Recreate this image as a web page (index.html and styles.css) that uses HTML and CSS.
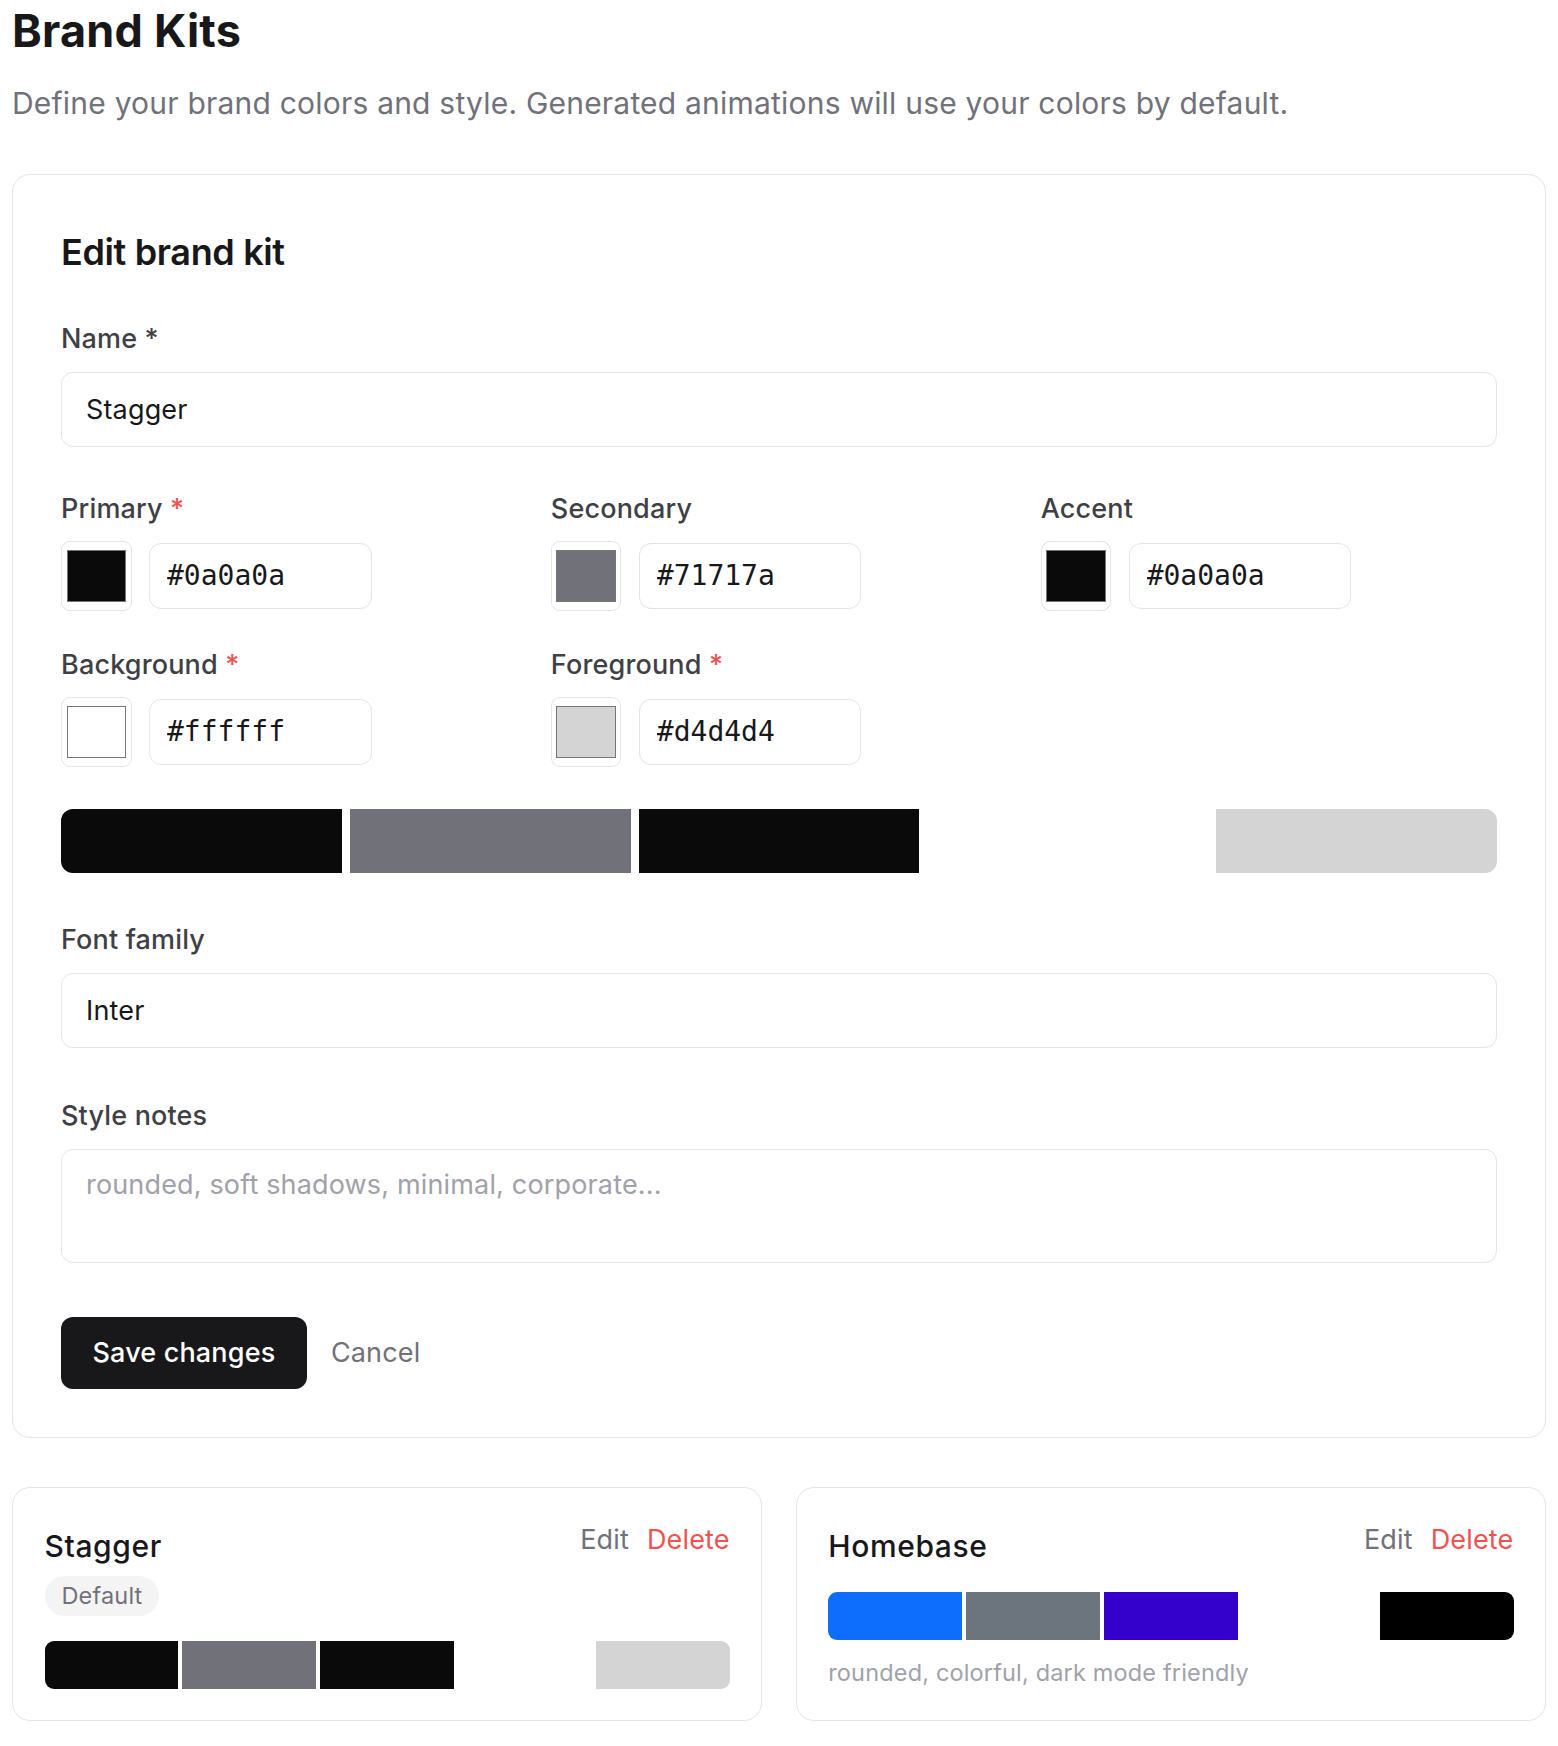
FILE: index.html
```html
<!DOCTYPE html>
<html>
<head>
<meta charset="utf-8">
<title>Brand Kits</title>
<link rel="stylesheet" href="styles.css">
</head>
<body>
<div class="page">
<h1 class="page-title">Brand Kits</h1>
<p class="page-sub">Define your brand colors and style. Generated animations will use your colors by default.</p>

<section class="card editor">
  <h2 class="editor-title">Edit brand kit</h2>

  <div class="field field-name">
    <label class="field-label">Name *</label>
    <input class="text-input" type="text" value="Stagger">
  </div>

  <div class="color-grid">
    <div class="color-field">
      <label class="field-label">Primary <span class="req">*</span></label>
      <div class="color-row">
        <div class="swatch-box"><span class="swatch" style="background:#0a0a0a"></span></div>
        <input class="hex-input" type="text" value="#0a0a0a">
      </div>
    </div>
    <div class="color-field">
      <label class="field-label">Secondary</label>
      <div class="color-row">
        <div class="swatch-box"><span class="swatch" style="background:#71717a"></span></div>
        <input class="hex-input" type="text" value="#71717a">
      </div>
    </div>
    <div class="color-field">
      <label class="field-label">Accent</label>
      <div class="color-row">
        <div class="swatch-box"><span class="swatch" style="background:#0a0a0a"></span></div>
        <input class="hex-input" type="text" value="#0a0a0a">
      </div>
    </div>
    <div class="color-field">
      <label class="field-label">Background <span class="req">*</span></label>
      <div class="color-row">
        <div class="swatch-box"><span class="swatch" style="background:#ffffff"></span></div>
        <input class="hex-input" type="text" value="#ffffff">
      </div>
    </div>
    <div class="color-field">
      <label class="field-label">Foreground <span class="req">*</span></label>
      <div class="color-row">
        <div class="swatch-box"><span class="swatch" style="background:#d4d4d4"></span></div>
        <input class="hex-input" type="text" value="#d4d4d4">
      </div>
    </div>
  </div>

  <div class="palette palette-lg">
    <span style="background:#0a0a0a"></span>
    <span style="background:#71717a"></span>
    <span style="background:#0a0a0a"></span>
    <span style="background:#ffffff"></span>
    <span style="background:#d4d4d4"></span>
  </div>

  <div class="field field-font">
    <label class="field-label">Font family</label>
    <input class="text-input" type="text" value="Inter">
  </div>

  <div class="field field-notes">
    <label class="field-label">Style notes</label>
    <textarea class="text-area" rows="2" placeholder="rounded, soft shadows, minimal, corporate..."></textarea>
  </div>

  <div class="actions">
    <button class="btn-primary">Save changes</button>
    <button class="btn-link">Cancel</button>
  </div>
</section>

<div class="kit-list">
  <article class="card kit">
    <div class="kit-head">
      <div>
        <h3 class="kit-name">Stagger</h3>
        <span class="badge">Default</span>
      </div>
      <div class="kit-actions">
        <a class="act-edit">Edit</a>
        <a class="act-delete">Delete</a>
      </div>
    </div>
    <div class="palette palette-sm">
      <span style="background:#0a0a0a"></span>
      <span style="background:#71717a"></span>
      <span style="background:#0a0a0a"></span>
      <span style="background:#ffffff"></span>
      <span style="background:#d4d4d4"></span>
    </div>
  </article>

  <article class="card kit">
    <div class="kit-head">
      <div>
        <h3 class="kit-name">Homebase</h3>
      </div>
      <div class="kit-actions">
        <a class="act-edit">Edit</a>
        <a class="act-delete">Delete</a>
      </div>
    </div>
    <div class="palette palette-sm">
      <span style="background:#0d6efd"></span>
      <span style="background:#6c757d"></span>
      <span style="background:#3300cc"></span>
      <span style="background:#ffffff"></span>
      <span style="background:#000000"></span>
    </div>
    <p class="kit-notes">rounded, colorful, dark mode friendly</p>
  </article>
</div>
</div>
</body>
</html>
```

FILE: styles.css
```css
body {
  margin: 0;
  padding: 4px 12px 12px;
  background: #fff;
  color: #18181b;
  font-family: "Inter", "Noto Sans", sans-serif;
  letter-spacing: 0.01em;
}

.page-title {
  margin: 0;
  font-size: 45px;
  line-height: 54px;
  font-weight: 700;
  letter-spacing: 0.005em;
}

.page-sub {
  margin: 24px 0 0;
  font-size: 30px;
  line-height: 42px;
  color: #71717a;
  letter-spacing: 0.007em;
}

.card {
  background: #fff;
  border: 1.5px solid #e4e4e7;
  border-radius: 18px;
}

/* editor card */
.editor {
  margin-top: 50px;
  padding: 53px 48px 48px;
}
.editor-title {
  margin: 0;
  font-size: 36px;
  line-height: 48px;
  font-weight: 600;
  letter-spacing: -0.01em;
}

.field-label {
  display: block;
  margin-bottom: 12px;
  font-size: 27px;
  line-height: 42px;
  font-weight: 500;
  color: #3f3f46;
}
.req {
  color: #f05252;
}

.field-name { margin-top: 42px; }
.field-font { margin-top: 46px; }
.field-notes { margin-top: 47px; }

.text-input,
.text-area {
  display: block;
  width: 100%;
  box-sizing: border-box;
  border: 1.5px solid #e4e4e7;
  border-radius: 12px;
  background: #fff;
  font-family: inherit;
  font-size: 27px;
  letter-spacing: inherit;
  color: #18181b;
  outline: none;
}
.text-input {
  height: 75px;
  padding: 0 24px;
  line-height: 42px;
}
.text-area {
  height: 114.5px;
  padding: 15px 24px;
  line-height: 40.5px;
  resize: none;
}
.text-area::placeholder {
  color: #a1a1aa;
}

/* colour pickers */
.color-grid {
  display: grid;
  grid-template-columns: repeat(3, 1fr);
  column-gap: 33.5px;
  row-gap: 33px;
  margin-top: 41px;
}
.color-field .field-label {
  margin-bottom: 10.5px;
}
.color-row {
  display: flex;
  align-items: center;
  gap: 17.5px;
}
.swatch-box {
  display: flex;
  align-items: center;
  justify-content: center;
  width: 70.5px;
  height: 70.5px;
  box-sizing: border-box;
  border: 1.5px solid #e4e4e7;
  border-radius: 9px;
}
.swatch {
  display: block;
  width: 59.5px;
  height: 51.5px;
  box-sizing: border-box;
  border: 1.5px solid #767676;
}
.hex-input {
  width: 222.5px;
  height: 66.5px;
  box-sizing: border-box;
  padding: 0 14px 0 17px;
  border: 1.5px solid #e4e4e7;
  border-radius: 12px;
  font-family: "DejaVu Sans Mono", "Liberation Mono", monospace;
  font-size: 28px;
  letter-spacing: 0;
  color: #18181b;
  outline: none;
}

/* palette strip */
.palette {
  display: flex;
  overflow: hidden;
}
.palette span {
  flex: 1;
}
.palette-lg {
  margin-top: 41.5px;
  height: 64px;
  gap: 8px;
  border-radius: 12px;
}
.palette-sm {
  margin-top: 25px;
  height: 48px;
  gap: 4.5px;
  border-radius: 9px;
}

.actions {
  display: flex;
  align-items: center;
  gap: 24px;
  margin-top: 53.5px;
}
.btn-primary {
  height: 72px;
  padding: 0 31.5px;
  border: 0;
  border-radius: 12px;
  background: #18181b;
  color: #fff;
  font-family: inherit;
  font-size: 27px;
  font-weight: 500;
  letter-spacing: inherit;
}
.btn-link {
  padding: 0;
  border: 0;
  background: none;
  color: #71717a;
  font-family: inherit;
  font-size: 27px;
  letter-spacing: inherit;
}

/* saved kits */
.kit-list {
  display: grid;
  grid-template-columns: 1fr 1fr;
  gap: 33.5px;
  margin-top: 49px;
}
.kit {
  padding: 31.5px;
}
.kit-head {
  display: flex;
  justify-content: space-between;
  align-items: flex-start;
}
.kit-name {
  margin: 5.5px 0 0;
  font-size: 30px;
  line-height: 42px;
  font-weight: 500;
  letter-spacing: 0.02em;
}
.badge {
  display: inline-block;
  margin-top: 9px;
  height: 40px;
  padding: 0 17px;
  border-radius: 999px;
  background: #f4f4f5;
  color: #71717a;
  font-size: 23.5px;
  line-height: 40px;
}
.kit-actions {
  display: flex;
  gap: 18px;
  font-size: 27px;
  line-height: 42px;
}
.act-edit { color: #71717a; }
.act-delete { color: #f05252; }

.kit-notes {
  margin: 16px 0 0;
  font-size: 23.5px;
  line-height: 33px;
  color: #a1a1aa;
}
```
